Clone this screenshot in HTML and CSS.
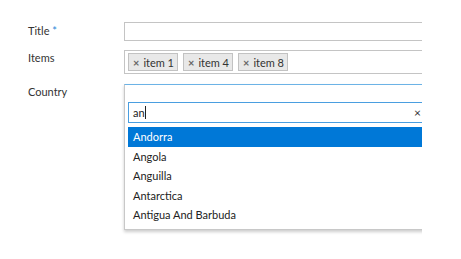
FILE: index.html
```html
<!DOCTYPE html>
<html lang="en">
<head>
    <meta charset="UTF-8">
    <title>Form</title>
    <link rel="stylesheet" href="styles.css">
</head>
<body>
    <div class="form">
        <div class="row row-title">
            <label class="label">Title <span class="req">*</span></label>
            <div class="field text-input"></div>
        </div>

        <div class="row row-items">
            <label class="label">Items</label>
            <div class="field tags">
                <span class="tag"><span class="tag-x">×</span>item 1</span>
                <span class="tag"><span class="tag-x">×</span>item 4</span>
                <span class="tag"><span class="tag-x">×</span>item 8</span>
            </div>
        </div>

        <div class="row row-country">
            <label class="label">Country</label>
            <div class="field select">
                <div class="select-current"></div>
                <div class="dropdown">
                    <div class="search">
                        <span class="search-text">an<span class="caret"></span></span>
                        <span class="search-clear">×</span>
                    </div>
                    <ul class="results">
                        <li class="active">Andorra</li>
                        <li>Angola</li>
                        <li>Anguilla</li>
                        <li>Antarctica</li>
                        <li>Antigua And Barbuda</li>
                    </ul>
                </div>
            </div>
        </div>
    </div>
</body>
</html>
```

FILE: styles.css
```css
* {
    margin: 0;
    padding: 0;
    box-sizing: border-box;
}

body {
    font-family: "Segoe UI", "Lato", "Liberation Sans", sans-serif;
    font-size: 11px;
    color: #333;
    background: #fff;
}

.form {
    width: 422px;
    height: 259px;
    overflow: hidden;
    padding-top: 22px;
}

.row {
    display: flex;
    align-items: flex-start;
}

.label {
    width: 124px;
    padding-left: 28px;
    flex-shrink: 0;
    color: #333;
}

.req {
    color: #2b88d8;
}

.field {
    width: 310px;
    flex-shrink: 0;
}

.row-title .label {
    padding-top: 2px;
}

.text-input {
    height: 19px;
    border: 1px solid #c4c4c4;
}

.row-items {
    margin-top: 9px;
}

.row-items .label {
    padding-top: 1px;
}

.tags {
    height: 24px;
    border: 1px solid #c4c4c4;
    display: flex;
    align-items: center;
    gap: 5px;
    padding-left: 3px;
}

.tag {
    display: flex;
    align-items: center;
    height: 18px;
    padding: 0 3px 0 4px;
    background: #e8e8e8;
    border: 1px solid #c2c2c2;
    color: #333;
}

.tag-x {
    color: #666;
    font-size: 11px;
    font-weight: bold;
    margin-right: 4px;
}

.row-country {
    margin-top: 10px;
}

.row-country .label {
    padding-top: 1px;
}

.select {
    border: 1px solid #c8c8c8;
    border-top-color: #6cb3e6;
    box-shadow: 0 2px 3px rgba(0, 0, 0, 0.2);
    padding: 0 0 4px 3px;
}

.select-current {
    height: 17px;
}

.search {
    display: flex;
    align-items: center;
    justify-content: space-between;
    height: 21px;
    width: 301px;
    border: 1px solid #4a9ee0;
    padding: 0 7px 0 4px;
    color: #222;
}

.caret {
    display: inline-block;
    width: 1px;
    height: 13px;
    background: #222;
    vertical-align: -2px;
}

.search-clear {
    color: #333;
    font-size: 12px;
}

.results {
    list-style: none;
    margin-top: 4px;
    width: 310px;
}

.results li {
    height: 19.4px;
    line-height: 19.4px;
    padding-left: 5px;
    color: #222;
}

.results li.active {
    height: 20px;
    background: #0078d7;
    color: #fff;
}
```
